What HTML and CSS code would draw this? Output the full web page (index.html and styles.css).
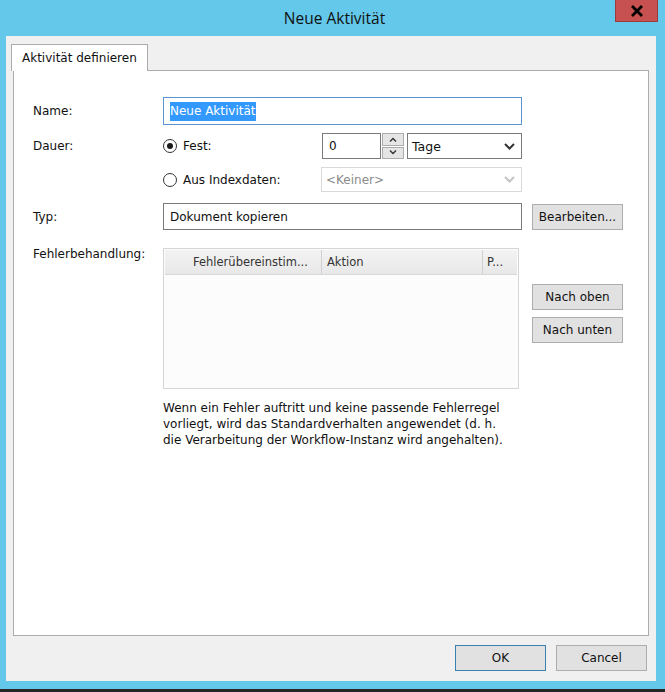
FILE: index.html
```html
<!DOCTYPE html>
<html lang="de">
<head>
    <meta charset="UTF-8">
    <title>Neue Aktivität</title>
    <link rel="stylesheet" href="styles.css">
</head>
<body>
    <div class="window">
        <header class="titlebar">
            <div class="title">Neue Aktivität</div>
            <button class="close">
                <svg width="14" height="12" viewBox="0 0 14 12"><path d="M2 1 L12 11 M12 1 L2 11" stroke="#000" stroke-width="2.8"/></svg>
            </button>
        </header>
        <div class="client">
            <div class="tabs">
                <div class="tab">Aktivität definieren</div>
            </div>
            <section class="panel">
                <!-- Name -->
                <div class="row row-name">
                    <label class="lbl">Name:</label>
                    <div class="field field-name"><span class="sel">Neue Aktivität</span></div>
                </div>
                <!-- Dauer -->
                <div class="row row-fest">
                    <label class="lbl">Dauer:</label>
                    <div class="radio-wrap w-fest"><span class="radio checked"></span>Fest:</div>
                    <div class="field field-num">0</div>
                    <div class="spin">
                        <span class="spin-btn"><svg width="8" height="5" viewBox="0 0 8 5"><path d="M1 4.5 L4 1.5 L7 4.5" fill="none" stroke="#333" stroke-width="1.4"/></svg></span>
                        <span class="spin-btn"><svg width="8" height="5" viewBox="0 0 8 5"><path d="M1 0.5 L4 3.5 L7 0.5" fill="none" stroke="#333" stroke-width="1.4"/></svg></span>
                    </div>
                    <div class="combo combo-tage">Tage
                        <svg class="chev" width="11" height="7" viewBox="0 0 11 7"><path d="M1 1 L5.5 5.5 L10 1" fill="none" stroke="#333" stroke-width="2"/></svg>
                    </div>
                </div>
                <div class="row row-index">
                    <span class="lbl"></span>
                    <div class="radio-wrap w-index"><span class="radio"></span>Aus Indexdaten:</div>
                    <div class="combo combo-off">&lt;Keiner&gt;
                        <svg class="chev" width="11" height="7" viewBox="0 0 11 7"><path d="M1 1 L5.5 5.5 L10 1" fill="none" stroke="#c4c4c4" stroke-width="2"/></svg>
                    </div>
                </div>
                <!-- Typ -->
                <div class="row row-typ">
                    <label class="lbl">Typ:</label>
                    <div class="field field-typ">Dokument kopieren</div>
                    <button class="btn btn-side">Bearbeiten...</button>
                </div>
                <!-- Fehlerbehandlung -->
                <div class="row row-err">
                    <label class="lbl lbl-top">Fehlerbehandlung:</label>
                    <div class="list">
                        <div class="list-head">
                            <span class="col col-1">Fehlerübereinstim...</span>
                            <span class="col col-2">Aktion</span>
                            <span class="col col-3">P...</span>
                        </div>
                    </div>
                    <div class="side-btns">
                        <button class="btn btn-side">Nach oben</button>
                        <button class="btn btn-side">Nach unten</button>
                    </div>
                </div>
                <p class="note">Wenn ein Fehler auftritt und keine passende Fehlerregel vorliegt, wird das Standardverhalten angewendet (d. h. die Verarbeitung der Workflow-Instanz wird angehalten).</p>
            </section>
            <footer class="footer">
                <button class="btn btn-foot default">OK</button>
                <button class="btn btn-foot">Cancel</button>
            </footer>
        </div>
    </div>
</body>
</html>
```

FILE: styles.css
```css
*{box-sizing: border-box;}
body{margin: 0; background-color: #262626;}
button{font: inherit; color: inherit; margin: 0; padding: 0;}

.window{
    width: 665px;
    height: 689px;
    background-color: #63c8ea;
    font-family: "DejaVu Sans", sans-serif;
    font-size: 12px;
    color: #111;
    position: relative;
}
.titlebar{
    height: 36px;
    display: flex;
    justify-content: center;
    align-items: center;
}
.titlebar .title{
    font-family: "Open Sans", sans-serif;
    font-size: 15.5px;
    color: #111;
    padding-left: 4px;
    padding-bottom: 1px;
}
.titlebar .close{
    position: absolute;
    top: 0;
    left: 615px;
    width: 43px;
    height: 22px;
    background-color: #c75050;
    border: 1px solid #9b3b3b;
    border-top: none;
    display: flex;
    justify-content: center;
    align-items: center;
}

.client{
    margin-left: 6px;
    width: 650px;
    height: 645px;
    background-color: #f0f0f0;
    padding: 8px 8px 0 5px;
}

.tabs{
    display: flex;
    height: 26px;
}
.tab{
    width: 137px;
    height: 27px;
    background-color: #fff;
    border: 1px solid #acacac;
    border-bottom: none;
    padding: 6px 0 0 10px;
    position: relative;
    z-index: 1;
    white-space: nowrap;
}

.panel{
    margin-left: 2px;
    width: 636px;
    height: 566px;
    background-color: #fff;
    border: 1px solid #acacac;
    padding: 26px 0 0 19px;
}

.row{
    display: flex;
    align-items: center;
}
.lbl{
    width: 130px;
    flex: none;
}
.lbl-top{
    align-self: flex-start;
}

.field{
    background-color: #fff;
    border: 1px solid #abadb3;
    display: flex;
    align-items: center;
    padding-left: 6px;
}
.row-name .field-name{
    width: 359px;
    height: 28px;
    border-color: #5b95cf;
    padding-left: 6px;
}
.sel{
    background-color: #3399ff;
    color: #fff;
    padding: 2px 0 3px;
}

.row-fest{
    margin-top: 8px;
    height: 26px;
}
.radio-wrap{
    display: flex;
    align-items: center;
    gap: 6px;
    flex: none;
}
.w-fest{width: 159px;}
.w-index{width: 158px;}
.radio{
    width: 14px;
    height: 14px;
    border: 1px solid #333;
    border-radius: 50%;
    background-color: #fff;
    display: flex;
    justify-content: center;
    align-items: center;
}
.radio.checked::after{
    content: "";
    width: 6px;
    height: 6px;
    border-radius: 50%;
    background-color: #1a1a1a;
}
.field-num{
    width: 59px;
    height: 26px;
    border-color: #7a7a7a;
    padding-left: 6px;
}
.spin{
    margin-left: 1px;
    width: 22px;
    height: 26px;
    display: flex;
    flex-direction: column;
    gap: 1px;
}
.spin-btn{
    flex: 1;
    background-color: #e5e5e5;
    border: 1px solid #acacac;
    display: flex;
    justify-content: center;
    align-items: center;
}
.combo{
    height: 26px;
    border: 1px solid #7a7a7a;
    background-color: #fff;
    display: flex;
    align-items: center;
    justify-content: space-between;
    padding: 0 6px 0 4px;
}
.combo-tage{
    margin-left: 3px;
    width: 115px;
    font-size: 12.5px;
}
.row-index{
    margin-top: 8px;
    height: 25px;
}
.combo-off{
    width: 201px;
    height: 25px;
    border-color: #d9d9d9;
    color: #8a8a8a;
    padding-left: 4px;
}

.row-typ{
    margin-top: 11px;
    height: 27px;
}
.field-typ{
    width: 359px;
    height: 27px;
    border-color: #7a7a7a;
}
.btn{
    background-color: #e1e1e1;
    border: 1px solid #adadad;
    display: flex;
    justify-content: center;
    align-items: center;
}
.btn-side{
    width: 91px;
    height: 26px;
    flex: none;
}
.row-typ .btn-side{margin-left: 10px;}

.row-err{
    margin-top: 18px;
    align-items: flex-start;
}
.row-err .lbl-top{margin-top: -1px;}
.list{
    width: 356px;
    height: 141px;
    border: 1px solid #d5d5d5;
    background-color: #fcfcfc;
    padding: 1px;
}
.list-head{
    height: 25px;
    display: flex;
    background: linear-gradient(#f3f3f3, #e8e8e8);
    border-bottom: 1px solid #d8d8d8;
    color: #333;
    font-size: 11.5px;
}
.col{
    display: flex;
    align-items: center;
    border-right: 1px solid #d0d0d0;
    padding-left: 5px;
    white-space: nowrap;
}
.col-1{width: 157px; padding-left: 28px;}
.col-2{width: 161px;}
.col-3{flex: 1; border-right: none; padding-left: 4px;}

.side-btns{
    margin-left: 13px;
    margin-top: 36px;
    display: flex;
    flex-direction: column;
    gap: 7px;
}

.note{
    margin: 11px 0 0 130px;
    width: 352px;
    line-height: 16px;
}

.footer{
    display: flex;
    justify-content: flex-end;
    gap: 10px;
    padding: 9px 1px 0 0;
}
.btn-foot{
    width: 91px;
    height: 26px;
}
.btn.default{border-color: #3c7fb1;}
```
